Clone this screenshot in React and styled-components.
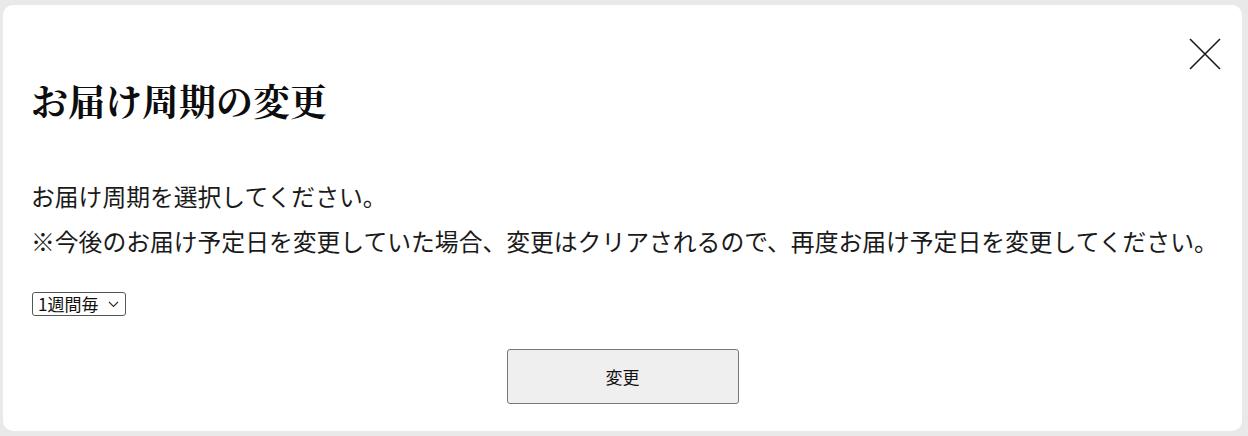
import React from "react";
import styled, { createGlobalStyle } from "styled-components";

const Global = createGlobalStyle`
  html, body { margin: 0; padding: 0; }
  body {
    background: #e9e9ea;
    font-family: "Noto Sans CJK JP", "Noto Sans", sans-serif;
    color: #111;
    width: 1248px;
    height: 436px;
    overflow: hidden;
  }
`;

const Overlay = styled.div`
  width: 1248px;
  height: 436px;
  padding: 5px 0 0 3px;
  box-sizing: border-box;
  background: #e9e9ea;
`;

const Modal = styled.div`
  position: relative;
  width: 1239px;
  height: 426px;
  background: #fff;
  border-radius: 10px;
  box-sizing: border-box;
  padding: 70px 0 0 28px;
  display: flex;
  flex-direction: column;
  align-items: flex-start;
`;

const Close = styled.button`
  position: absolute;
  top: 33px;
  right: 21px;
  width: 32px;
  height: 32px;
  padding: 0;
  border: none;
  background: transparent;
  display: flex;
  align-items: center;
  justify-content: center;
`;

const Title = styled.h2`
  margin: 0;
  font-family: "Noto Serif CJK JP", "Noto Sans CJK JP", serif;
  font-weight: 700;
  font-size: 37px;
  line-height: 50px;
  color: #0d0d0d;
`;

const Text = styled.p`
  margin: 48px 0 0 0;
  font-size: 23.8px;
  line-height: 45px;
  color: #1a1a1a;
`;

const SelectWrap = styled.div`
  position: relative;
  display: inline-flex;
  margin-top: 29px;
  margin-left: 1px;
`;

const Select = styled.select`
  appearance: none;
  -webkit-appearance: none;
  font-family: "Noto Sans CJK JP", sans-serif;
  font-size: 17px;
  color: #111;
  height: 24px;
  width: 94px;
  padding: 0 0 0 5px;
  border: 1px solid #555;
  border-radius: 3px;
  background: #fff;
  box-sizing: border-box;
  line-height: 22px;
`;

const Chevron = styled.svg`
  position: absolute;
  right: 7px;
  top: 9px;
  pointer-events: none;
`;

const Actions = styled.div`
  align-self: stretch;
  display: flex;
  justify-content: center;
  margin-top: 33px;
  padding-right: 28px;
`;

const Button = styled.button`
  width: 232px;
  height: 55px;
  background: #efefef;
  border: 1px solid #777;
  border-radius: 3px;
  font-family: "Noto Sans CJK JP", sans-serif;
  font-size: 17px;
  color: #111;
  cursor: pointer;
`;

export default function App() {
  return (
    <>
      <Global />
      <Overlay>
        <Modal>
          <Close aria-label="閉じる">
            <svg width="32" height="32" viewBox="0 0 32 32">
              <path d="M1 1 L31 31 M31 1 L1 31" stroke="#1b1b1b" strokeWidth="1.6" fill="none" />
            </svg>
          </Close>
          <Title>お届け周期の変更</Title>
          <Text>
            お届け周期を選択してください。
            <br />
            ※今後のお届け予定日を変更していた場合、変更はクリアされるので、再度お届け予定日を変更してください。
          </Text>
          <SelectWrap>
            <Select defaultValue="1">
              <option value="1">1週間毎</option>
              <option value="2">2週間毎</option>
              <option value="3">3週間毎</option>
              <option value="4">4週間毎</option>
            </Select>
            <Chevron width="11" height="7" viewBox="0 0 11 7">
              <path d="M1 1 L5.5 5.5 L10 1" stroke="#333" strokeWidth="1.2" fill="none" />
            </Chevron>
          </SelectWrap>
          <Actions>
            <Button>変更</Button>
          </Actions>
        </Modal>
      </Overlay>
    </>
  );
}
